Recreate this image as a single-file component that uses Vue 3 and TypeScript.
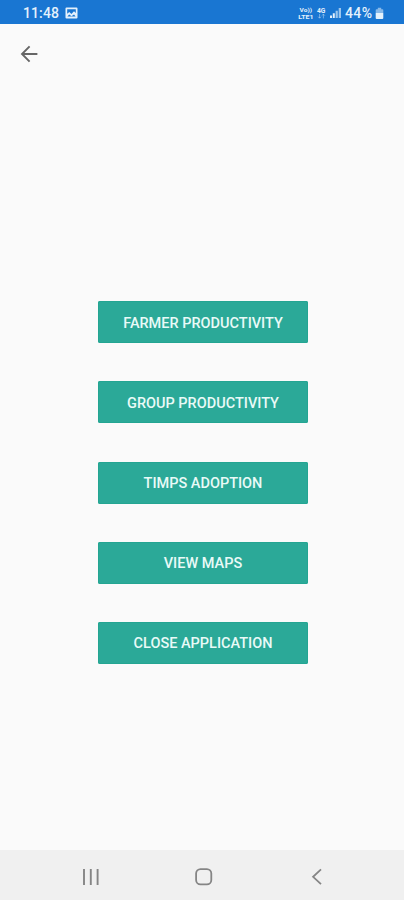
<script setup lang="ts">
interface Action {
  id: string
  label: string
}

const actions: Action[] = [
  { id: 'farmer', label: 'Farmer Productivity' },
  { id: 'group', label: 'Group Productivity' },
  { id: 'timps', label: 'Timps Adoption' },
  { id: 'maps', label: 'View Maps' },
  { id: 'close', label: 'Close Application' },
]
</script>

<template>
  <div class="screen">
    <header class="status-bar">
      <div class="status-left">
        <span class="time">11:48</span>
        <svg class="photo" viewBox="0 0 13 12" width="13" height="12">
          <path fill="currentColor" fill-rule="evenodd" d="M1.5 .5h10a1 1 0 0 1 1 1v9a1 1 0 0 1-1 1h-10a1 1 0 0 1-1-1v-9a1 1 0 0 1 1-1zM2.2 2.2v4.6L4.3 5 6.4 7 9 4.2 10.8 6V2.2zM2.4 9.6h8.2L9 7.4 6.5 9.2 4.2 7.6z" />
        </svg>
      </div>
      <div class="status-right">
        <svg class="signals" viewBox="0 0 45 14" width="45" height="14">
          <g fill="currentColor" font-family="Roboto, sans-serif" font-weight="700">
            <text x="1.6" y="6.2" font-size="6" textLength="12.4" lengthAdjust="spacingAndGlyphs">Vo))</text>
            <text x="0.2" y="12.8" font-size="6" textLength="15.4" lengthAdjust="spacingAndGlyphs">LTE1</text>
            <text x="19" y="6.6" font-size="6.4" textLength="8.4" lengthAdjust="spacingAndGlyphs">4G</text>
          </g>
          <g fill="none" stroke="currentColor" stroke-width=".9" opacity=".5">
            <path d="M21.6 8v4M20.2 10.7l1.4 1.5 1.4-1.5M25.4 12.4v-4M24 9.6l1.4-1.5 1.4 1.5" />
          </g>
          <g fill="currentColor">
            <path d="M32 9.4h2V12h-2zM34.8 7.3h2V12h-2z" />
            <path d="M37.6 4.8h2.2V12h-2.2zM40.7 2h2.3v10h-2.3z" opacity=".65" />
          </g>
        </svg>
        <span class="percent">44%</span>
        <svg viewBox="0 0 9 13" width="9" height="13">
          <path fill="currentColor" opacity=".55" d="M2.8.8h3.4v1.4h1.2a.9.9 0 0 1 .9.9V6H.7V3.1a.9.9 0 0 1 .9-.9h1.2z" />
          <path fill="currentColor" d="M.7 6h7.6v5a1 1 0 0 1-1 1H1.7a1 1 0 0 1-1-1z" />
        </svg>
      </div>
    </header>

    <div class="toolbar">
      <button class="back" aria-label="Back">
        <svg viewBox="0 0 18 18" width="18" height="18" fill="none" stroke="currentColor" stroke-width="1.9">
          <path d="M17.4 9H2.2M9.6 1.3 2 9l7.6 7.7" />
        </svg>
      </button>
    </div>

    <main class="actions">
      <button v-for="action in actions" :key="action.id" class="action">{{ action.label }}</button>
    </main>

    <nav class="nav-bar">
      <svg viewBox="0 0 18 18" width="18" height="18" fill="none" stroke="currentColor" stroke-width="1.9">
        <path d="M2 1v16M8.8 1v16M15.6 1v16" />
      </svg>
      <svg viewBox="0 0 18 18" width="18" height="18" fill="none" stroke="currentColor" stroke-width="1.8">
        <rect x="1.1" y="1.1" width="15.2" height="15.2" rx="4.4" />
      </svg>
      <svg viewBox="0 0 18 18" width="18" height="18" fill="none" stroke="currentColor" stroke-width="1.8">
        <path d="M13 1.4 5.1 8.8l7.9 7.4" />
      </svg>
    </nav>
  </div>
</template>

<style>
body {
  background: #fafafa;
}
</style>

<style scoped>
.screen {
  display: flex;
  flex-direction: column;
  width: 404px;
  height: 900px;
  overflow: hidden;
  background: #fafafa;
  font-family: Roboto, sans-serif;
}

svg {
  display: block;
  flex: none;
}

.status-bar {
  display: flex;
  justify-content: space-between;
  height: 24px;
  flex: none;
  box-sizing: border-box;
  padding: 0 20px 0 23px;
  background: #1976d2;
  color: #e4f1fc;
}

.status-left,
.status-right {
  display: flex;
  align-items: center;
  height: 26px;
}

.time {
  width: 37px;
  font-size: 14px;
  font-weight: 500;
  letter-spacing: 0.1px;
}

.photo {
  margin-left: 5px;
}

.signals {
  margin-right: 2px;
}

.percent {
  width: 30px;
  font-size: 14px;
  font-weight: 500;
  letter-spacing: 0.4px;
}

.toolbar {
  display: flex;
  align-items: center;
  height: 60px;
  flex: none;
  padding-left: 20px;
}

.back {
  padding: 0;
  border: 0;
  background: none;
  color: #666;
}

.actions {
  display: flex;
  flex: 1;
  flex-direction: column;
  align-items: center;
  gap: 38.2px;
  padding: 217.25px 0 0 2px;
}

.action {
  width: 210px;
  height: 42px;
  flex: none;
  box-sizing: border-box;
  padding: 2.4px 0 0;
  border: 0;
  border-radius: 2px;
  background: #2ba998;
  box-shadow: inset 0 0 0 1px #24a592;
  color: #e9faf7;
  font-family: inherit;
  font-size: 14.5px;
  font-weight: 500;
  line-height: 39.6px;
  text-transform: uppercase;
}

.nav-bar {
  display: flex;
  align-items: center;
  justify-content: space-between;
  height: 50px;
  flex: none;
  box-sizing: border-box;
  padding: 3px 78px 0 82px;
  background: #f0f0f0;
  color: #858585;
}
</style>
